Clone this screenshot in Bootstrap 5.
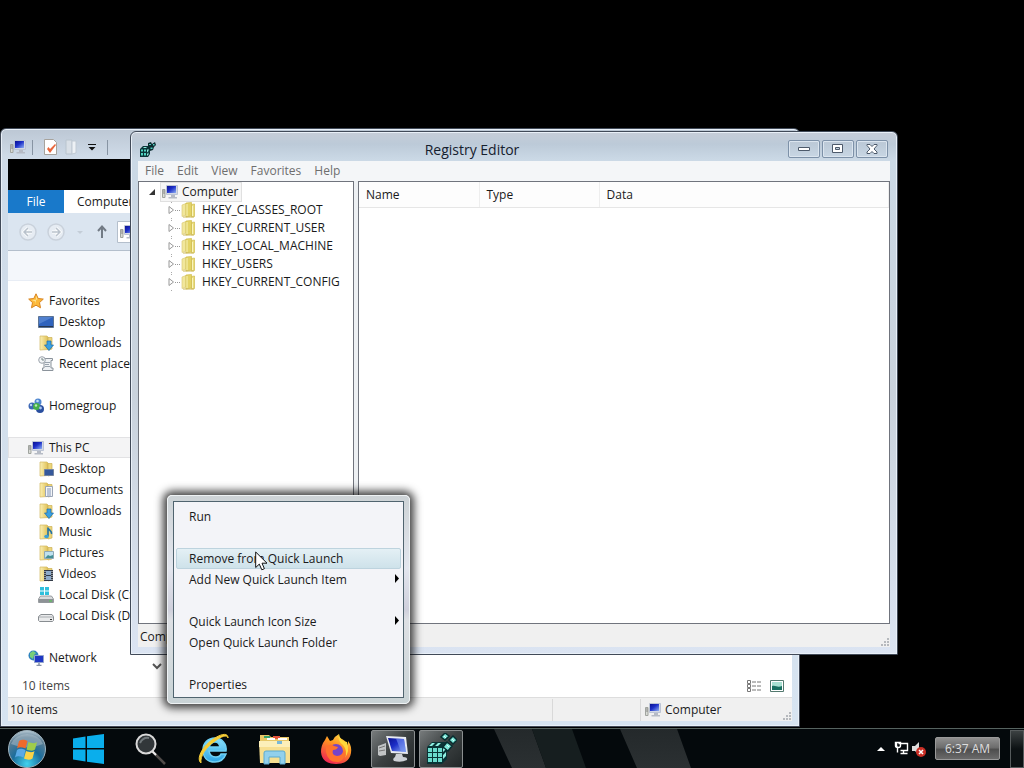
<!DOCTYPE html>
<html lang="en">
<head>
<meta charset="utf-8">
<meta name="viewport" content="width=device-width, initial-scale=1">
<title>Desktop</title>
<link href="https://cdn.jsdelivr.net/npm/bootstrap@5.3.0/dist/css/bootstrap.min.css" rel="stylesheet">
<style>
body{background:#000;color:#1a1a1a;font:12px/20px "Open Sans","Noto Sans",sans-serif}
.desk{min-height:100vh;overflow:hidden}
button{font:inherit;color:inherit;background:none;border:0;padding:0;text-align:left;white-space:nowrap}
svg{flex:none;display:block}
ul{list-style:none;margin:0;padding:0}
.win{position:absolute;border:1px solid #414a58;border-radius:6px 6px 0 0;padding:0 7px 7px;box-shadow:inset 0 0 0 1px #e9f0f8}
.explorer{left:0;top:128px;width:800px;height:599px;padding-bottom:5px;background:linear-gradient(#bcc7d4,#cfdbe8 28px,#d7e4f1)}
.registry{left:130px;top:131px;width:768px;height:524px;background:linear-gradient(#c6cdd8,#bccad8 12px,#cbd9e6 28px,#c9d2dc 50%,#dbe4f2)}
/* Explorer */
.quick{height:30px;padding:6px 0 0 2px;gap:6px}
.vline{width:1px;height:15px;background:#8794a3}
.blackband{height:31px;background:#000}
.tabs{height:23px;background:#fff}
.filetab{width:56px;background:#1979ca;color:#fff;text-align:center}
.comptab{padding-left:13px}
.navbar-row{height:38px;background:#dbe5f0;border-bottom:1px solid #b4bfcc}
.band{height:30px;background:#f4f7fb;border-bottom:1px solid #e8edf5}
.panes{background:#fff;min-height:0}
.navpane{width:154px;padding-top:9px}
.navpane li{height:21px;display:flex;align-items:center;gap:5px;padding-left:20px;white-space:nowrap}
.navpane li.sub{padding-left:30px}
.navpane li.on{background:#f4f4f5;box-shadow:inset 0 0 0 1px #e2e2e4}
.items-row{height:22px;background:#fff;color:#444;padding:0 8px 0 14px}
.sbar{height:24px;background:#f0f0f0;border-top:1px solid #ddd;padding-left:2px}
.cell{border-left:1px solid #d9d9d9;height:22px}
.cell-a{width:88px}
.cell-b{width:142px}
.chev{left:151px;top:534px}
/* Registry */
.tbar{height:29px}
.tbar-icon{margin:9px 0 0 2px}
.wtitle{font-size:14px;color:#15202e;text-align:center;padding-top:8px;line-height:20px}
.ctls{gap:2px;padding:8px 2px 0 0}
.ctl{width:32px;height:18px;border:1px solid #7d91a8;border-radius:2px;display:flex;align-items:center;justify-content:center;box-shadow:inset 0 0 0 1px #dbe5ef}
.menu{height:20px;background:#f4f6f8;color:#6e6e6e;padding-left:7px;gap:13px}
.split{background:#edf0f3;gap:4px;min-height:0}
.tree{width:216px;flex:none;background:#fff;border:1px solid #70747d;padding-top:1px}
.tree li{height:18px;line-height:18px;display:flex;align-items:center;padding-left:28px;white-space:nowrap}
.tree li.root{padding-left:9px;gap:5px}
.branch{width:5px;height:10px;border-bottom:1px dotted #999;align-self:flex-start}
.knot{margin-right:6px}
.tree li:not(.root){background:linear-gradient(#aaa,#aaa) 32px 1px/1px 1px no-repeat,linear-gradient(#aaa,#aaa) 32px 17px/1px 1px no-repeat}
.rootlab{background:#f6f6f6;outline:1px solid #e0e0e0;padding:0 2px 0 1px;gap:4px}
.list{background:#fff;border:1px solid #70747d}
.list table{width:100%;table-layout:fixed}
.list th{font-weight:400;height:25px;padding:1px 0 0 7px;border-right:1px solid #eee;border-bottom:1px solid #e6e6e6;background:#fdfdfd}
.col-a{width:120px}
.rstat{height:23px;background:#f0f0f0;padding:2px 0 0 2px}
/* Context menu */
.ctx{position:absolute;left:167px;top:495px;width:243px;height:209px;border-radius:5px;padding:5px;background:linear-gradient(#cdd3d6,#e3e6ee 35%,#cfd0dc 55%,#dde0e4 60%,#c9d3d6);border:1px solid #eef2f4;box-shadow:0 0 9px 4px rgba(0,0,0,.75)}
.ctxbody{background:#f3f4f8;border:1px solid #50646f;height:100%;padding:4px 2px}
.ctxbody button{display:flex;justify-content:space-between;align-items:center;width:100%;height:21px;padding:0 0 0 12px;border:1px solid transparent;border-radius:2px}
.ctxbody .hot{background:linear-gradient(#e4f0f5,#cee2ea);border-color:#bdd3de}
.ctxbody li.gap{height:21px}
.cursor{position:absolute;left:255px;top:551px}
/* Taskbar */
.taskbar{position:absolute;left:0;right:0;bottom:0;height:40px;border-top:1px solid #56635f;background:#04090c;color:#ddd}
.glare{position:absolute;left:0;top:0}
.tb{display:flex;justify-content:center;align-items:center}
.start{width:54px}
.tb-m{width:54px}
.tb-l{width:70px}
.tb-xl{width:72px}
.tb-s{width:50px}
.tb-f{width:67px}
.task{width:44px;height:38px;border:1px solid #8b8f90;border-radius:2px;display:flex;align-items:center;justify-content:center;background:linear-gradient(135deg,#777b7c,#3b4041 50%,#222728)}
.clock{width:65px;height:23px;border:1px solid #9a9a9a;border-radius:2px;background:linear-gradient(#8f8f8f,#6d6d6d 45%,#4e4e4e 55%,#6a6a6a);color:#ddd;text-align:center}
.peek{width:14px;height:38px;border:1px solid #565b5c;background:linear-gradient(#3c4142,#0c1113 50%);margin-left:10px}
.tray{gap:8px}
</style>
</head>
<body>
<svg width="0" height="0" class="position-absolute" aria-hidden="true">
<defs>
<linearGradient id="gf" x1="0" x2="1"><stop offset="0" stop-color="#fbf0b4"/><stop offset="1" stop-color="#dfc055"/></linearGradient>
<linearGradient id="gb" x1="0" y1="0" x2="1" y2="1"><stop offset="0" stop-color="#0a1190"/><stop offset=".45" stop-color="#1d2fc8"/><stop offset="1" stop-color="#8fb0f2"/></linearGradient>
<linearGradient id="gl" x1="0" y1="0" x2="0" y2="1"><stop offset="0" stop-color="#24292b"/><stop offset="1" stop-color="#2b3032"/></linearGradient>
<radialGradient id="orb" cx=".5" cy=".9" r=".9"><stop offset="0" stop-color="#41d3ee"/><stop offset=".45" stop-color="#1c6d9c"/><stop offset=".8" stop-color="#5b7d93"/><stop offset="1" stop-color="#b9cbd6"/></radialGradient>
<linearGradient id="fx" x1=".8" y1="0" x2=".3" y2="1"><stop offset="0" stop-color="#ffe14a"/><stop offset=".4" stop-color="#ff9422"/><stop offset="1" stop-color="#ef2452"/></linearGradient>
<linearGradient id="ieg" x1="0" y1="0" x2="0" y2="1"><stop offset="0" stop-color="#8ce1fb"/><stop offset="1" stop-color="#2ea5e4"/></linearGradient>
<symbol id="pc" viewBox="0 0 16 16"><path d="M.5 5.500h2.500v8H.5z" fill="#d9dbd6" stroke="#a0a49f"/><path d="M1 7h2M1 9h2" stroke="#888"/><path d="M4.500 1.500h11v9h-11z" fill="#d3d8e5" stroke="#bcc4d4"/><path d="M5 2h9v7H5z" fill="url(#gb)"/><path d="M9 11h4v2h2v1.500H6.500V13H9z" fill="#b6bbc5"/></symbol>
<symbol id="fold" viewBox="0 0 16 16"><path d="M2 1h7l1 1v12.500L2 15z" fill="url(#gf)" stroke="#d3b860" stroke-width=".7"/><path d="M10 2.500h4V14l-4 1z" fill="#ecd67b" stroke="#cdb055" stroke-width=".7"/></symbol>
<symbol id="kfold" viewBox="0 0 16 16"><path d="M2 3l4-1.500V13l-4 1.500z" fill="#f1e79c" stroke="#dccb78" stroke-width=".7"/><path d="M6 1l5.500-.5V14L6 15z" fill="#e3d365" stroke="#cfbc4e" stroke-width=".7"/><path d="M11.500 2.500L14.500 2v12.500l-3 .5z" fill="#eadc7c" stroke="#cfbc4e" stroke-width=".7"/><path d="M7 2v12M12.500 4v10" stroke="#f9f4bb"/><path d="M3 15h11" stroke="#cdb95a"/></symbol>
<symbol id="reg" viewBox="0 0 32 32"><path d="M2 14l5-5h15v17l-5 5H2z" fill="#0a3436"/><path d="M3 15h4v4H3zm5 0h4v4H8zm5 0h4v4h-4zM3 20h4v4H3zm5 0h4v4H8zm5 0h4v4h-4zM3 25h4v4H3zm5 0h4v4H8zm5 0h4v4h-4z" fill="#6bdccd"/><path d="M4 13l3-3h3l-3 3zm6 0l3-3h3l-3 3zm8 3l3-4v4l-3 3zm0 6l3-3v4l-3 3z" fill="#8ff0e2"/><path d="M20 0l4 3-4 4-4-3zm8 3l4 4-4 4-4-4zm-6 6l5 4-4 5-5-4z" fill="#7de6d8" stroke="#062e30" stroke-width="1.500"/><path d="M19 3l2 2M27 6l2 2M22 12l2 2" stroke="#d9fff8"/></symbol>
<symbol id="regs" viewBox="0 0 16 16"><path d="M0 8l3-3h7v8l-2 3H0z" fill="#0a3538"/><path d="M1 8.500h2v2H1zm3 0h2v2H4zM1 12h2v2.500H1zm3 0h2v2.500H4z" fill="#4fd6c4"/><path d="M7 9l1.500-1.500V10L7 11.500zm0 4l1.500-1.500v2L7 15zM4 6h3L6 7H3z" fill="#8ff0e2"/><path d="M8 2l3-1 1 2 3-2 1 3-2 2-1 3-3 1-2-3z" fill="#0b2c30"/><path d="M9 3h2v1H9zm4 0h1.500v1.500H13zM10.500 6.500h2V8h-2z" fill="#55cfc0"/></symbol>
<symbol id="disk" viewBox="0 0 16 16"><path d="M2.500 8h11l2 3v3.500H.5V11z" fill="#d8dadc" stroke="#85898d" stroke-width=".8"/><path d="M1 11h14v3.500H1z" fill="#8d9296"/><path d="M11 13h3" stroke="#4fd04c"/></symbol>
<symbol id="grip" viewBox="0 0 10 10"><path d="M7 1h2v2H7zM4 4h2v2H4zM7 4h2v2H7zM1 7h2v2H1zM4 7h2v2H4zM7 7h2v2H7z" fill="#b6b9bd"/></symbol>
<symbol id="exp" viewBox="0 0 8 10"><path d="M2 1.500v7L6.500 5z" fill="#fff" stroke="#999"/></symbol>
</defs></svg>

<main class="desk position-relative">
<section class="win explorer d-flex flex-column" aria-label="Explorer">
  <div class="quick d-flex align-items-center">
    <svg width="16" height="16"><use href="#pc"/></svg><span class="vline me-1"></span>
    <svg width="16" height="16" viewBox="0 0 16 16"><path d="M1.500.5h9l3 3v12h-12z" fill="#fff" stroke="#a7a39d"/><path d="M4 10l3 4 6-8-1-1-5 5-1.500-2z" fill="#e8663c"/></svg>
    <svg width="12" height="16" viewBox="2 0 12 16"><path d="M3 1h6v14H3z" fill="#d9e0e7" stroke="#b9c4ce"/><path d="M9 2h4v12l-4 1z" fill="#edf1f5" stroke="#c0cad4"/></svg>
    <svg class="ms-1" width="10" height="10" viewBox="0 0 10 10"><path d="M1 2h8v1H1zM1.500 5h7L5 8.500z" fill="#111"/></svg>
    <span class="vline ms-1"></span>
  </div>
  <div class="blackband"></div>
  <div class="tabs d-flex"><button class="filetab" type="button">File</button><button class="comptab" type="button">Computer</button></div>
  <div class="navbar-row d-flex align-items-center">
    <svg class="ms-2" width="124" height="24" viewBox="0 0 124 24"><g fill="#e6ecf3" stroke="#c9d1db" stroke-width="1.500"><circle cx="12" cy="12" r="8"/><circle cx="40" cy="12" r="8"/></g><path d="M16 12H8m4-4l-4 4 4 4M36 12h8m-4-4l4 4-4 4" fill="none" stroke="#fff" stroke-width="3"/><path d="M16 12H8m4-4l-4 4 4 4M36 12h8m-4-4l4 4-4 4" fill="none" stroke="#b9c2cc" stroke-width="1.500"/><path d="M61 11h6l-3 3z" fill="#c4cdd7"/><path d="M86 18V7m-4 4l4-4.500 4 4.500" fill="none" stroke="#727b85" stroke-width="2"/><path d="M101.500 1.500h30v21h-30z" fill="#fff" stroke="#b4bfcc"/><svg x="104" y="4" width="16" height="16"><use href="#pc"/></svg></svg>
  </div>
  <div class="band"></div>
  <div class="panes d-flex flex-grow-1">
    <ul class="navpane">
      <li><svg width="16" height="16" viewBox="0 0 16 16"><path d="M8 .8l2.200 4.700 5.100.6-3.800 3.500 1 5.200L8 12.200l-4.500 2.600 1-5.200L.7 6.100l5.100-.6z" fill="#fcb93a" stroke="#d98420"/><path d="M8 2.500l1.500 4-6 .5 4 1.500L8 12z" fill="#ffe390"/></svg>Favorites</li>
      <li class="sub"><svg width="16" height="16" viewBox="0 0 16 16"><path d="M.5 2.500h15v11H.5z" fill="#2f63bd" stroke="#5b7394"/><path d="M1 3h14L1 10z" fill="#5080cf"/><path d="M1 12.500h14" stroke="#26364f"/></svg>Desktop</li>
      <li class="sub"><svg width="16" height="16" viewBox="0 0 16 16"><use href="#fold"/><path d="M9 6h4v4h2.500L11 15.500 6.500 10H9z" fill="#3aa0e0" stroke="#1b6cae" stroke-width=".7"/></svg>Downloads</li>
      <li class="sub"><svg width="16" height="16" viewBox="0 0 16 16"><path d="M4 2.500h10.500v2H13V12h2v2.500H4.500V12H6V5" fill="#eef1f4" stroke="#8b939b"/><path d="M7 6.500h5M7 8.500h4M7 10.500h5" stroke="#9aa4ae"/><circle cx="4" cy="4" r="3.300" fill="#f4f6f8" stroke="#9ba3ab"/><path d="M4 2v2h2" fill="none" stroke="#788"/></svg>Recent places</li>
      <li></li>
      <li><svg width="16" height="16" viewBox="0 0 16 16"><circle cx="10" cy="4" r="3.500" fill="#4e86cf"/><circle cx="4" cy="8" r="3.500" fill="#3c67b5"/><circle cx="12" cy="11" r="4" fill="#294f9f"/><circle cx="8.500" cy="8.500" r="3.500" fill="#45ae4a"/><circle cx="9.500" cy="3" r="1.300" fill="#c4def6"/><circle cx="3" cy="7" r="1.200" fill="#bcd5f5"/><circle cx="12.500" cy="10" r="1.400" fill="#a8c4f0"/><circle cx="8" cy="7.500" r="1.200" fill="#bdebb5"/></svg>Homegroup</li>
      <li></li>
      <li class="on"><svg width="16" height="16"><use href="#pc"/></svg>This PC</li>
      <li class="sub"><svg width="16" height="16" viewBox="0 0 16 16"><use href="#fold"/><path d="M6.500 8.500h9v6h-9z" fill="#35589b" stroke="#72839e"/></svg>Desktop</li>
      <li class="sub"><svg width="16" height="16" viewBox="0 0 16 16"><use href="#fold"/><path d="M7.500 4.500h7v10h-7z" fill="#f4f6f9" stroke="#9aa4b5"/><path d="M9 7h4M9 9h4M9 11h4M9 13h4" stroke="#8294b5"/></svg>Documents</li>
      <li class="sub"><svg width="16" height="16" viewBox="0 0 16 16"><use href="#fold"/><path d="M9 6h4v4h2.500L11 15.500 6.500 10H9z" fill="#3aa0e0" stroke="#1b6cae" stroke-width=".7"/></svg>Downloads</li>
      <li class="sub"><svg width="16" height="16" viewBox="0 0 16 16"><use href="#fold"/><path d="M10 3.500V12M10 4c1 2 4 3 3.500 6" fill="none" stroke="#2272a6" stroke-width="1.600"/><ellipse cx="8.500" cy="12.500" rx="2.300" ry="1.800" fill="#3aa0d8"/></svg>Music</li>
      <li class="sub"><svg width="16" height="16" viewBox="0 0 16 16"><use href="#fold"/><path d="M6.500 6.500h9v7h-9z" fill="#bfe1ef" stroke="#8fa8b4"/><path d="M7 13l3-3 2 1 3-1v3z" fill="#448f95"/></svg>Pictures</li>
      <li class="sub"><svg width="16" height="16" viewBox="0 0 16 16"><use href="#fold"/><path d="M6 4h9v11H6z" fill="#333b47"/><path d="M8 5h5v4H8zm0 5h5v4H8z" fill="#8eabca"/><path d="M7 5v10M14 5v10" stroke="#eee" stroke-dasharray="1 1"/></svg>Videos</li>
      <li class="sub"><svg width="16" height="16" viewBox="0 0 16 16"><use href="#disk" y="1"/><path d="M2 0h4v3.500H2zm5 0h4v3.500H7zM2 4.500h4V8H2zm5 0h4V8H7z" fill="#2fbfdc"/></svg>Local Disk (C:)</li>
      <li class="sub"><svg width="16" height="16" viewBox="0 0 16 16"><path d="M3 6.500h11l1.500 2v4l-1 1h-13l-1-1v-4z" fill="#e9eaeb" stroke="#888d91"/><path d="M1 9h14" stroke="#a8acb0"/><path d="M12 11.500h2" stroke="#333"/></svg>Local Disk (D:)</li>
      <li></li>
      <li><svg width="16" height="16" viewBox="0 0 16 16"><circle cx="5.500" cy="5.500" r="5" fill="#2e83bd"/><path d="M2 3l3-2 3 2-2 2-1 4-3-2z" fill="#78cf78"/><path d="M6.500 5.500h9v7h-9z" fill="#1f37c4" stroke="#93a5cc"/><path d="M11 13v2M8.500 15.500h5" stroke="#8792a8" stroke-width="1.500"/></svg>Network</li>
    </ul>
  </div>
  <div class="items-row d-flex align-items-center"><span class="flex-grow-1">10 items</span>
    <svg class="me-2" width="16" height="14" viewBox="0 0 16 14"><path d="M1.500 1.500h3v3h-3zm0 4h3v3h-3zm0 4h3v3h-3z" fill="#fff" stroke="#777"/><path d="M6 3h4m1 0h4M6 7h4m1 0h4M6 11h4m1 0h4" stroke="#777"/></svg>
    <svg width="14" height="12" viewBox="0 0 14 12"><path d="M.5.5h13v11H.5z" fill="#fff" stroke="#53796f"/><path d="M2 2h10v8H2z" fill="#a8e0d2"/><path d="M2 6c4-1 5 2 10 0v4H2z" fill="#197061"/></svg>
  </div>
  <div class="sbar d-flex align-items-center"><span class="flex-grow-1">10 items</span><span class="cell cell-a"></span><span class="cell cell-b d-flex align-items-center gap-1 ps-1"><svg width="16" height="16"><use href="#pc"/></svg>Computer</span><svg class="align-self-end" width="10" height="10"><use href="#grip"/></svg></div>
  <svg class="chev position-absolute" width="10" height="7" viewBox="0 0 10 7"><path d="M1 1l4 4 4-4" fill="none" stroke="#555" stroke-width="2"/></svg>
</section>

<section class="win registry d-flex flex-column" aria-label="Registry Editor">
  <div class="tbar d-flex">
    <svg class="tbar-icon" width="16" height="16"><use href="#regs"/></svg>
    <div class="wtitle flex-grow-1">Registry Editor</div>
    <div class="ctls d-flex">
      <button class="ctl" aria-label="Minimize"><svg width="12" height="6" viewBox="0 0 12 6"><path d="M.5 1.500h11v3H.5z" fill="#fff" stroke="#4d5a6b"/></svg></button>
      <button class="ctl" aria-label="Maximize"><svg width="12" height="10" viewBox="0 0 12 10"><path d="M.5.5h10v8H.5zm3 3v2h4v-2z" fill="#fff" fill-rule="evenodd" stroke="#4d5a6b"/></svg></button>
      <button class="ctl" aria-label="Close"><svg width="12" height="10" viewBox="0 0 12 10"><path d="M1 .5h3l2 2 2-2h3v1L8 5l3 3v1.500H8l-2-2-2 2H1V8l3-3-3-3.500z" fill="#fff" stroke="#4d5a6b"/></svg></button>
    </div>
  </div>
  <nav class="menu d-flex"><button>File</button><button>Edit</button><button>View</button><button>Favorites</button><button>Help</button></nav>
  <div class="split d-flex flex-grow-1">
    <ul class="tree">
      <li class="root"><svg width="8" height="8" viewBox="0 0 8 8"><path d="M7 1v6H1z" fill="#333"/></svg><span class="rootlab d-flex align-items-center"><svg width="16" height="16"><use href="#pc"/></svg>Computer</span></li>
      <li><svg width="8" height="10"><use href="#exp"/></svg><span class="branch"></span><svg class="knot" width="16" height="16"><use href="#kfold"/></svg>HKEY_CLASSES_ROOT</li>
      <li><svg width="8" height="10"><use href="#exp"/></svg><span class="branch"></span><svg class="knot" width="16" height="16"><use href="#kfold"/></svg>HKEY_CURRENT_USER</li>
      <li><svg width="8" height="10"><use href="#exp"/></svg><span class="branch"></span><svg class="knot" width="16" height="16"><use href="#kfold"/></svg>HKEY_LOCAL_MACHINE</li>
      <li><svg width="8" height="10"><use href="#exp"/></svg><span class="branch"></span><svg class="knot" width="16" height="16"><use href="#kfold"/></svg>HKEY_USERS</li>
      <li><svg width="8" height="10"><use href="#exp"/></svg><span class="branch"></span><svg class="knot" width="16" height="16"><use href="#kfold"/></svg>HKEY_CURRENT_CONFIG</li>
    </ul>
    <div class="list flex-grow-1"><table><colgroup><col class="col-a"><col class="col-a"><col></colgroup><thead><tr><th>Name</th><th>Type</th><th>Data</th></tr></thead></table></div>
  </div>
  <div class="rstat d-flex align-items-center"><span class="flex-grow-1">Computer</span><svg class="align-self-end" width="10" height="10"><use href="#grip"/></svg></div>
</section>

<div class="ctx"><ul class="ctxbody">
  <li><button>Run</button></li><li class="gap"></li>
  <li><button class="hot">Remove from Quick Launch</button></li>
  <li><button>Add New Quick Launch Item<svg width="6" height="12" viewBox="0 0 6 12"><path d="M1 0v9l4-4.500z" fill="#000"/></svg></button></li><li class="gap"></li>
  <li><button>Quick Launch Icon Size<svg width="6" height="12" viewBox="0 0 6 12"><path d="M1 0v9l4-4.500z" fill="#000"/></svg></button></li>
  <li><button>Open Quick Launch Folder</button></li><li class="gap"></li>
  <li><button>Properties</button></li>
</ul></div>
<svg class="cursor" width="13" height="20" viewBox="0 0 13 20"><path d="M.7 1v15.500l3.600-3.400 2.500 5.700 2.600-1.100L7 12.200h5z" fill="#fff" stroke="#111"/></svg>

<footer class="taskbar d-flex align-items-center">
  <svg class="glare" width="720" height="39" viewBox="0 0 720 39"><path d="M494 0h38l14 39h-34zM620 0h57l14 39h-54z" fill="url(#gl)"/><path d="M532 0h40l14 39h-40z" fill="#161e1f"/></svg>
  <div class="d-flex position-relative align-items-center">
    <button class="start d-flex justify-content-center" aria-label="Start"><svg width="40" height="38" viewBox="0 0 40 38"><circle cx="20" cy="19" r="18.500" fill="url(#orb)" stroke="#9fb3be"/><path d="M4 14a17 15 0 0 1 32 0q-16 7-32 0z" fill="#c5d3dc" opacity=".4"/><path d="M12 11c3-2 6-1 8.500 0l-2 7.500c-3-1-6-2-8.500 0z" fill="#ee6b2c"/><path d="M21.500 12c3 1 5.500 2 8.500 0l-2 7.500c-3 2-5.500 1-8.500 0z" fill="#9fcd4b"/><path d="M10 20c3-2 5.500-1 8.500 0l-2 7.500c-3-1-6-2-8.500 0z" fill="#5aa9e6"/><path d="M19 21c3 1 6 2 8.500 0l-2 7.500c-3 2-6 1-8.500 0z" fill="#fbd347"/></svg></button>
    <button class="tb tb-l" aria-label="Windows"><svg width="32" height="30" viewBox="0 0 32 30"><path d="M0 4.500L12.500 2.500V14H0zM14 2.300L31 0v14H14zM0 15.500h12.500V27.500L0 25.500zM14 15.500h17V30l-17-2.300z" fill="#0aaeec"/></svg></button>
    <button class="tb tb-m" aria-label="Search"><svg width="32" height="32" viewBox="0 0 32 32"><path d="M17 18l13 13" stroke="#504b49" stroke-width="2.500"/><path d="M17 18l4 4" stroke="#eee" stroke-width="2"/><circle cx="11" cy="11" r="9.500" fill="#32373a" stroke="#d9d9d9" stroke-width="2"/><path d="M5 10q3-6 9-5" fill="none" stroke="#70777a" stroke-width="2"/></svg></button>
    <button class="tb tb-xl" aria-label="Internet Explorer"><svg width="32" height="32" viewBox="0 0 32 32"><path d="M28 18H11q1 6 7 6 4 0 5-3h5q-3 8-11 8C9 29 5 24 5 17S10 5 17 5s12 6 11 13zM11 14h11q-1-5-5-5t-6 5z" fill="url(#ieg)" fill-rule="evenodd" stroke="#6fd0f4" stroke-width="1.500"/><path d="M3 30C-2 26 4 14 14 7 22 1 30-1 30 5c0-3-5-3-13 3C8 14 2 23 3 30z" fill="#f7cd36" stroke="#f7cd36"/></svg></button>
    <button class="tb tb-s" aria-label="File Explorer"><svg width="32" height="32" viewBox="0 0 32 32"><path d="M1 5V2h9l2 2h18v5H1z" fill="#e7c767"/><path d="M5 3h6v2H5z" fill="#36a36b"/><path d="M14 3h7v3h-7z" fill="#e4533d"/><path d="M8 5h8v2H8zm11 0h9v2h-9z" fill="#fff"/><path d="M0 8h31v22H1z" fill="#f7df90"/><path d="M0 8h31v6H0z" fill="#fcefb9"/><path d="M18 8h5v3h-5z" fill="#79b8d8"/><path d="M5 31V20q0-2 2-2h17q2 0 2 2v11h-5v-7H10v7z" fill="#92d0ec" stroke="#5baad0"/></svg></button>
    <button class="tb tb-f me-1" aria-label="Firefox"><svg class="ms-1" width="32" height="32" viewBox="0 0 32 32"><path d="M5 7l2-4 3 5 3-1q2-4 6-6-1 4 3 5 5 3 6 7V8q4 5 3 12-2 11-15 11Q2 31 1 19 1 12 5 7z" fill="url(#fx)"/><circle cx="16" cy="18" r="7" fill="#7544c8"/><path d="M6 14q4-4 8-1l4 1q-1 3-5 3-2 5 4 6 6 0 7-7 3 9-5 13Q8 30 6 19z" fill="#ff722d"/><path d="M19 1q-2 7 4 11 5 6 2 13 5-7 2-16-7-1-8-8z" fill="#ffd83b"/></svg></button>
    <button class="task" aria-label="Computer"><svg width="32" height="30" viewBox="0 0 32 30"><path d="M1 12l8-3v12l-6 1-2-1z" fill="#c1c4c5"/><path d="M2 14l6-2M2 17l6-1" stroke="#777"/><path d="M9 2l20 1 2 17-17-1z" fill="#e7eaf0"/><path d="M11 4l16 1 2 13-14-1z" fill="url(#gb)"/><path d="M19 4.500l8 .5 2 13-5-.4z" fill="#7693f0" opacity=".6"/><path d="M19 20h6l1 3q5 0 4 3-6 3-13 1-2-2 1-4z" fill="#ccd0d5"/></svg></button>
    <button class="task ms-1" aria-label="Registry Editor"><svg width="32" height="32"><use href="#reg"/></svg></button>
  </div>
  <div class="tray d-flex align-items-center ms-auto position-relative">
    <svg width="8" height="5" viewBox="0 0 8 5"><path d="M0 5l4-4 4 4z" fill="#fff"/></svg>
    <svg width="34" height="18" viewBox="0 0 34 18"><path d="M5.500 3.500h9v7h-7m-4-8v3a2 2 0 0 0 4 0v-3h-5v3a2 2 0 0 0 2 2v5m6-2v3m-3 0h7" fill="none" stroke="#fff" stroke-width="1.400"/><path d="M19 6h3l4-4v13l-4-4h-3z" fill="#ddd"/><circle cx="28" cy="12" r="5" fill="#c92e25"/><path d="M26 10l4 4m0-4l-4 4" stroke="#fff" stroke-width="1.500"/></svg>
    <div class="d-flex align-items-center"><button class="clock">6:37 AM</button><button class="peek" aria-label="Show desktop"></button></div>
  </div>
</footer>
</main>
<script src="https://cdn.jsdelivr.net/npm/bootstrap@5.3.0/dist/js/bootstrap.bundle.min.js"></script>
</body>
</html>
